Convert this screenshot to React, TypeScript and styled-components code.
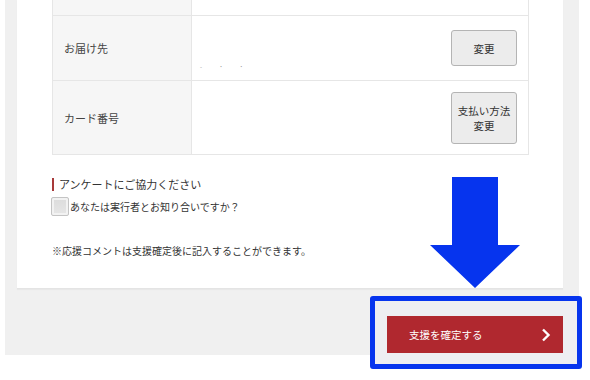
import * as React from 'react';
import styled, { createGlobalStyle } from 'styled-components';

const GlobalStyle = createGlobalStyle`
  html, body {
    margin: 0;
    padding: 0;
    background: #fff;
  }
  body {
    font-family: "Noto Sans CJK JP", "Noto Sans", sans-serif;
    color: #333;
  }
`;

const Stage = styled.div`
  position: relative;
  width: 590px;
  height: 380px;
  overflow: hidden;
`;

const Page = styled.div`
  margin-left: 5px;
  width: 574px;
  height: 355px;
  box-sizing: border-box;
  padding: 0 16px 0 12px;
  background: #f0f0f0;
  display: flex;
  flex-direction: column;
`;

const Panel = styled.div`
  height: 289px;
  box-sizing: border-box;
  padding: 0 34px 0 35px;
  background: #fff;
  border-bottom: 1px solid #e4e4e4;
  box-shadow: 0 1px 1px rgba(0, 0, 0, 0.03);
`;

const Table = styled.div`
  display: flex;
  flex-direction: column;
  border-left: 1px solid #e6e6e6;
  border-right: 1px solid #e6e6e6;
`;

const Row = styled.div<{ $h: number }>`
  display: grid;
  grid-template-columns: 139px 1fr;
  height: ${({ $h }) => $h}px;
  border-bottom: 1px solid #e6e6e6;
  box-sizing: border-box;
`;

const Label = styled.div`
  display: flex;
  align-items: center;
  padding-left: 11px;
  background: #f6f6f6;
  border-right: 1px solid #e6e6e6;
  font-size: 11px;
  color: #444;
`;

const Value = styled.div`
  position: relative;
  display: flex;
  align-items: center;
  justify-content: flex-end;
  padding-right: 11px;
`;

const Smudge = styled.span`
  position: absolute;
  left: 8px;
  bottom: 9px;
  font-size: 6px;
  letter-spacing: 8px;
  color: #999;
`;

const ChangeButton = styled.button<{ $h: number }>`
  width: 66px;
  height: ${({ $h }) => $h}px;
  padding: 0;
  border: 1px solid #b4b4b4;
  border-radius: 3px;
  background: #ececec;
  font-family: inherit;
  font-size: 10.5px;
  line-height: 15px;
  color: #333;
`;

const Survey = styled.div`
  margin-top: 22px;
  display: flex;
  flex-direction: column;
`;

const SurveyTitle = styled.div`
  display: flex;
  align-items: center;
  gap: 5px;
  font-size: 11px;
  line-height: 14px;
  color: #333;

  &::before {
    content: '';
    width: 2px;
    height: 13px;
    background: #a83a3a;
  }
`;

const CheckRow = styled.label`
  margin-top: 6px;
  display: flex;
  align-items: center;
  font-size: 10px;
  color: #333;
`;

const Check = styled.span`
  width: 16px;
  height: 17px;
  margin-left: -1px;
  margin-right: 1px;
  border: 1px solid #c4c4c4;
  border-radius: 2px;
  background: linear-gradient(#dcdcdc, #e6e6e6);
  box-shadow: inset 0 0 0 2px #f2f2f2;
`;

const Note = styled.p`
  margin: 28px 0 0;
  font-size: 10px;
  line-height: 14px;
  color: #333;
`;

const Footer = styled.div`
  display: flex;
  justify-content: flex-end;
  padding-top: 27px;
`;

const SubmitButton = styled.button`
  position: relative;
  z-index: 2;
  width: 176px;
  height: 37px;
  box-sizing: border-box;
  padding: 0 11px 0 22px;
  border: none;
  background: #b0282f;
  color: #fff;
  font-family: inherit;
  font-size: 10.5px;
  display: flex;
  align-items: center;
  justify-content: space-between;
`;

const Highlight = styled.div`
  position: absolute;
  z-index: 1;
  left: 370px;
  top: 296px;
  width: 212px;
  height: 73px;
  box-sizing: border-box;
  border: 5px solid #0634ee;
  border-radius: 3px;
  background: #eeeef2;
`;

const Arrow = styled.svg`
  position: absolute;
  z-index: 3;
  left: 430px;
  top: 177px;
`;

const rows = [
  { label: 'お届け先', h: 65, btn: ['変更'], bh: 36, smudge: true },
  { label: 'カード番号', h: 74, btn: ['支払い方法', '変更'], bh: 52, smudge: false },
];

const App: React.FC = () => (
  <Stage>
    <GlobalStyle />
    <Page>
      <Panel>
        <Table>
          <Row $h={16}>
            <Label />
            <Value />
          </Row>
          {rows.map(row => (
            <Row key={row.label} $h={row.h}>
              <Label>{row.label}</Label>
              <Value>
                {row.smudge && <Smudge>- ˙ ˙</Smudge>}
                <ChangeButton $h={row.bh}>
                  {row.btn.map((line, i) => (
                    <React.Fragment key={line}>
                      {i > 0 && <br />}
                      {line}
                    </React.Fragment>
                  ))}
                </ChangeButton>
              </Value>
            </Row>
          ))}
        </Table>
        <Survey>
          <SurveyTitle>アンケートにご協力ください</SurveyTitle>
          <CheckRow>
            <Check />
            あなたは実行者とお知り合いですか？
          </CheckRow>
          <Note>※応援コメントは支援確定後に記入することができます。</Note>
        </Survey>
      </Panel>
      <Footer>
        <SubmitButton>
          支援を確定する
          <svg width="12" height="14" viewBox="0 0 12 14">
            <path d="M3 1.5 L8.5 7 L3 12.5" fill="none" stroke="#fff" strokeWidth="2.4" />
          </svg>
        </SubmitButton>
      </Footer>
    </Page>
    <Highlight />
    <Arrow width="90" height="112" viewBox="0 0 90 112">
      <polygon points="22,0 68,0 68,68 90,68 45,111 0,68 22,68" fill="#0634ee" />
    </Arrow>
  </Stage>
);

export default App;
